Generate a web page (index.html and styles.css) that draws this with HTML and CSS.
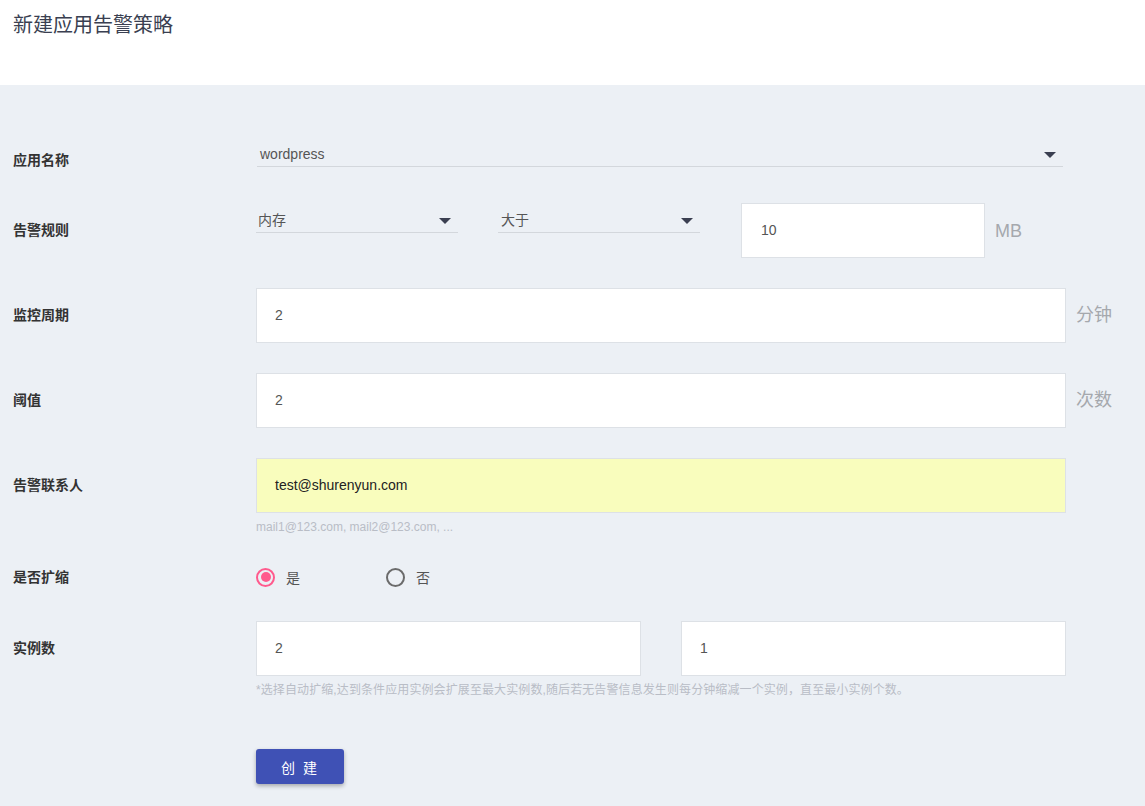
FILE: index.html
```html
<!DOCTYPE html>
<html lang="zh">
<head>
<meta charset="utf-8">
<title>新建应用告警策略</title>
<link rel="stylesheet" href="styles.css">
</head>
<body>
<header class="page-header">
  <h1 class="page-title">新建应用告警策略</h1>
</header>
<main class="page-main">
  <form class="form">
    <div class="row row-first">
      <label class="label">应用名称</label>
      <div class="control">
        <div class="select select-full"><span>wordpress</span><i class="caret"></i></div>
      </div>
    </div>

    <div class="row">
      <label class="label">告警规则</label>
      <div class="control control-rule">
        <div class="select select-sm"><span>内存</span><i class="caret"></i></div>
        <div class="select select-sm"><span>大于</span><i class="caret"></i></div>
        <div class="input input-sm">10</div>
        <span class="unit">MB</span>
      </div>
    </div>

    <div class="row">
      <label class="label">监控周期</label>
      <div class="control control-unit">
        <div class="input input-full">2</div>
        <span class="unit">分钟</span>
      </div>
    </div>

    <div class="row">
      <label class="label">阈值</label>
      <div class="control control-unit">
        <div class="input input-full">2</div>
        <span class="unit">次数</span>
      </div>
    </div>

    <div class="row row-hint">
      <label class="label">告警联系人</label>
      <div class="control-stack">
        <div class="input input-full input-autofill">test@shurenyun.com</div>
        <p class="hint">mail1@123.com, mail2@123.com, ...</p>
      </div>
    </div>

    <div class="row row-radio">
      <label class="label label-short">是否扩缩</label>
      <div class="control radios">
        <span class="radio radio-on"><i class="dot"></i>是</span>
        <span class="radio"><i class="dot"></i>否</span>
      </div>
    </div>

    <div class="row row-instances">
      <label class="label">实例数</label>
      <div class="control-stack">
        <div class="pair">
          <div class="input input-half">2</div>
          <div class="input input-half">1</div>
        </div>
        <p class="hint hint-cn">*选择自动扩缩,达到条件应用实例会扩展至最大实例数,随后若无告警信息发生则每分钟缩减一个实例，直至最小实例个数。</p>
      </div>
    </div>

    <div class="actions">
      <button type="button" class="btn-primary">创 建</button>
    </div>
  </form>
</main>
</body>
</html>
```

FILE: styles.css
```css
* { box-sizing: border-box; }

html, body {
  margin: 0;
  padding: 0;
}

body {
  font-family: "Liberation Sans", "Noto Sans CJK SC", sans-serif;
  color: #333;
  background: #ecf0f5;
  min-height: 806px;
}

.page-header {
  background: #fff;
  height: 85px;
  padding: 12px 13px 0;
}

.page-title {
  margin: 0;
  font-size: 20px;
  line-height: 26px;
  font-weight: normal;
  color: #3a3f51;
}

.page-main {
  padding: 48px 13px 20px;
}

.row {
  display: flex;
  align-items: flex-start;
  margin-bottom: 30px;
}

.row-first { margin-bottom: 15px; }

.label {
  flex: 0 0 243px;
  height: 55px;
  line-height: 55px;
  font-size: 14px;
  font-weight: bold;
  color: #333;
}

.control {
  display: flex;
  align-items: flex-start;
}

.control-unit, .control-rule { align-items: center; }

.select {
  position: relative;
  height: 30px;
  border-bottom: 1px solid #d3d7dc;
  font-size: 14px;
  color: #555;
  line-height: 30px;
  padding: 0 0 0 3px;
}

.select span { display: block; line-height: 30px; margin-top: 2px; }

.row-first .select { margin-top: 4px; }

.select-full { width: 806px; margin-left: 1px; }

.select-sm { width: 202px; margin-right: 40px; align-self: flex-start; }
.select-sm:first-child { margin-left: 0; padding-left: 2px; }

.caret {
  position: absolute;
  right: 7px;
  top: 15px;
  width: 0;
  height: 0;
  border-left: 6px solid transparent;
  border-right: 6px solid transparent;
  border-top: 6px solid #3a3f51;
}

.input {
  height: 55px;
  line-height: 53px;
  border: 1px solid #dde1e6;
  background: #fff;
  font-size: 14px;
  color: #555;
  padding: 0 18px;
}

.input-full { width: 810px; }
.input-sm { width: 244px; padding-left: 19px; margin-left: 1px; }
.input-half { width: 385px; }
.input-autofill { background: #f9fdbd; color: #222; }

.unit {
  margin-left: 10px;
  font-size: 18px;
  line-height: 20px;
  color: #a5a8ad;
  margin-top: -2px;
}

.control-rule .unit { margin-top: 0; }

.control-stack {
  display: flex;
  flex-direction: column;
}

.hint {
  margin: 6px 0 0;
  font-size: 12px;
  line-height: 16px;
  color: #b9bdc6;
}

.hint-cn { letter-spacing: 0.1px; font-size: 12px; }

.row-hint { margin-bottom: 32px; }

.row-radio { margin-bottom: 34px; }
.label-short { height: 20px; line-height: 20px; }

.radios {
  height: 20px;
  align-items: center;
  padding-left: 0;
}

.radio {
  display: inline-flex;
  align-items: center;
  font-size: 14px;
  color: #555;
  width: 130px;
}

.dot {
  display: inline-block;
  width: 19px;
  height: 19px;
  border-radius: 50%;
  border: 2px solid #6b6b6b;
  margin-right: 11px;
  position: relative;
}

.radio-on .dot { border-color: #ff5a8d; }
.radio-on .dot::after {
  content: "";
  position: absolute;
  left: 2.5px;
  top: 2.5px;
  width: 10px;
  height: 10px;
  border-radius: 50%;
  background: #ff5a8d;
}

.pair {
  display: flex;
  gap: 40px;
}

.row-instances { margin-bottom: 51px; }

.actions { padding-left: 243px; }

.btn-primary {
  width: 88px;
  height: 35px;
  border: none;
  border-radius: 3px;
  background: #3f51b5;
  color: #fff;
  font-family: "Liberation Sans", "Noto Sans CJK SC", sans-serif;
  font-size: 14px;
  letter-spacing: 2px;
  box-shadow: 0 2px 4px rgba(0, 0, 0, 0.3);
  cursor: pointer;
}
```
